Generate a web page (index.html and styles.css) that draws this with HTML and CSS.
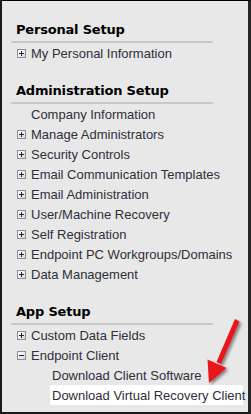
FILE: index.html
```html
<!DOCTYPE html>
<html lang="en">
<head>
  <meta charset="UTF-8" />
  <meta name="viewport" content="width=device-width, initial-scale=1.0"/>
  <title>Setup Menu</title>
  <link rel="stylesheet" href="styles.css">
</head>
<body>
  <div class="panel">
    <div class="section">
      <h2 class="section-title">Personal Setup</h2>
      <ul class="menu">
        <li class="item"><span class="toggle plus"></span>My Personal Information</li>
      </ul>
    </div>

    <div class="section">
      <h2 class="section-title">Administration Setup</h2>
      <ul class="menu">
        <li class="item"><span class="toggle blank"></span>Company Information</li>
        <li class="item"><span class="toggle plus"></span>Manage Administrators</li>
        <li class="item"><span class="toggle plus"></span>Security Controls</li>
        <li class="item"><span class="toggle plus"></span>Email Communication Templates</li>
        <li class="item"><span class="toggle plus"></span>Email Administration</li>
        <li class="item"><span class="toggle plus"></span>User/Machine Recovery</li>
        <li class="item"><span class="toggle plus"></span>Self Registration</li>
        <li class="item"><span class="toggle plus"></span>Endpoint PC Workgroups/Domains</li>
        <li class="item"><span class="toggle plus"></span>Data Management</li>
      </ul>
    </div>

    <div class="section">
      <h2 class="section-title">App Setup</h2>
      <ul class="menu">
        <li class="item"><span class="toggle plus"></span>Custom Data Fields</li>
        <li class="item"><span class="toggle minus"></span>Endpoint Client</li>
        <li class="item sub">Download Client Software</li>
        <li class="item sub active">Download Virtual Recovery Client</li>
      </ul>
    </div>

    <svg class="arrow" width="60" height="100" viewBox="185 310 60 100">
      <defs>
        <filter id="shadow" x="-50%" y="-50%" width="200%" height="200%">
          <feDropShadow dx="2" dy="2" stdDeviation="1.5" flood-color="#000" flood-opacity="0.45"/>
        </filter>
      </defs>
      <g filter="url(#shadow)" fill="#e8141a">
        <polygon points="235,319 239.5,321.5 221,364 216.5,362"/>
        <polygon points="209,383 207.5,359.5 226.5,368"/>
      </g>
    </svg>
  </div>
</body>
</html>
```

FILE: styles.css
```css
* {
  margin: 0;
  padding: 0;
  box-sizing: border-box;
}

body {
  width: 251px;
  height: 414px;
  background: #fff;
}

.panel {
  position: relative;
  width: 251px;
  height: 414px;
  background: #e8e8e8;
  border-top: 1px solid #000;
  border-left: 2px solid #1a1a1a;
  border-right: 3px solid #262626;
  border-bottom: 2px solid #1a1a1a;
  padding-top: 21px;
}

.section + .section {
  margin-top: 20px;
}

.section-title {
  margin: 0 35px 0 9px;
  padding: 0 0 3px 5px;
  border-bottom: 2px solid #c9c9c9;
  font-family: "DejaVu Sans", Verdana, sans-serif;
  font-size: 13px;
  line-height: 16px;
  font-weight: bold;
  letter-spacing: -0.2px;
  color: #000;
}

.menu {
  list-style: none;
}

.item {
  display: flex;
  align-items: center;
  height: 20px;
  padding-left: 15px;
  font-family: "Liberation Sans", Arial, sans-serif;
  font-size: 13px;
  color: #2f2f3a;
  white-space: nowrap;
}

.item.sub {
  padding-left: 50px;
}

.item.active {
  margin: 0 5px 0 48px;
  padding-left: 2px;
  background: #fff;
}

.toggle {
  position: relative;
  width: 9px;
  height: 9px;
  margin-right: 5px;
  flex-shrink: 0;
}

.toggle.plus,
.toggle.minus {
  border: 1px solid #8c8c9a;
  background: linear-gradient(135deg, #ffffff, #d8d8e0);
}

.toggle.plus::before,
.toggle.minus::before {
  content: '';
  position: absolute;
  left: 1px;
  top: 3px;
  width: 5px;
  height: 1px;
  background: #222;
}

.toggle.plus::after {
  content: '';
  position: absolute;
  left: 3px;
  top: 1px;
  width: 1px;
  height: 5px;
  background: #222;
}

.arrow {
  position: absolute;
  left: 183px;
  top: 309px;
}
```
